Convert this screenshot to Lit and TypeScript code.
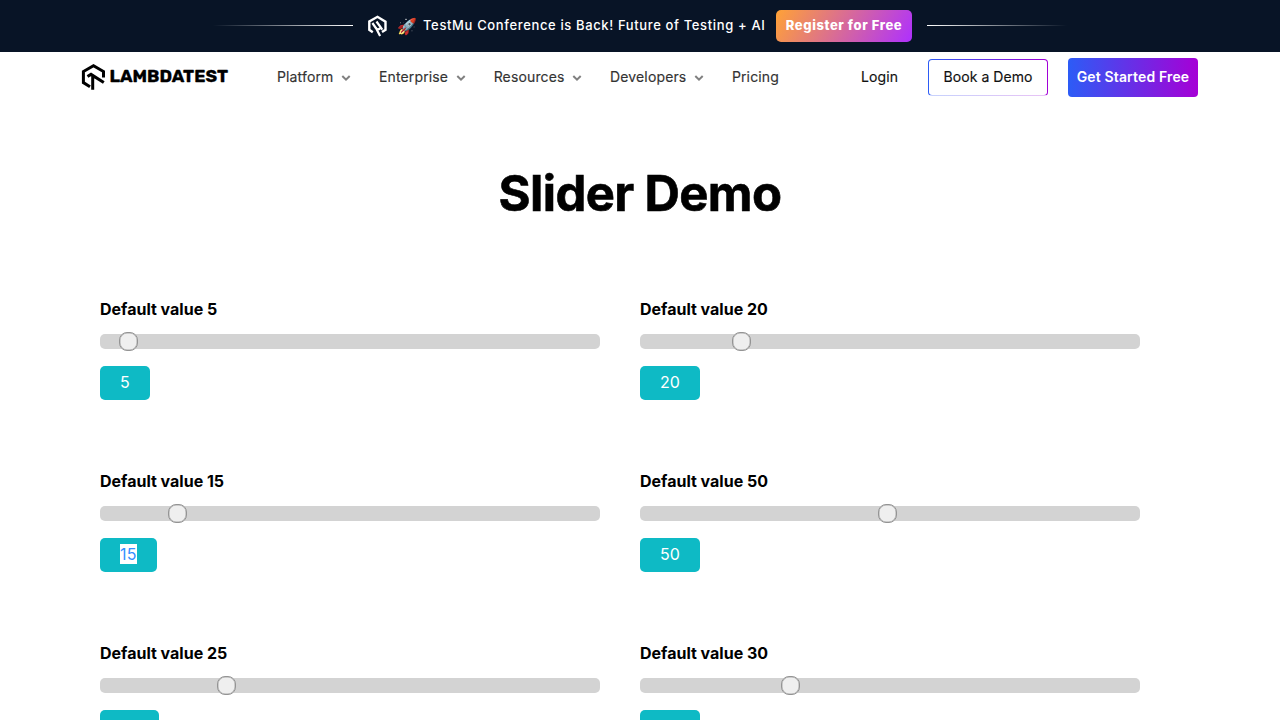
import { LitElement, html, css, svg } from "lit";
import { customElement, property } from "lit/decorators.js";
import { styleMap } from "lit/directives/style-map.js";

@customElement("range-slider")
class RangeSlider extends LitElement {
  @property({ type: Number }) value = 1;
  @property({ type: Boolean }) selected = false;
  static styles = css`
    :host { display: block; width: 500px; height: 172px; }
    h4 { margin: 0; font-size: 16px; line-height: 24px; font-weight: 700; letter-spacing: 0; }
    .row { display: flex; align-items: center; height: 15px; margin-top: 13px; border-radius: 5px; background: #d3d3d3; }
    .thumb { box-sizing: border-box; flex: none; width: 19px; height: 19px; border: 1px solid #949494; border-radius: 8px; background: #efefef; box-shadow: inset 0 0 0 0.5px #aaa; }
    output { display: inline-block; height: 34px; margin-top: 17px; padding: 0 20px; border-radius: 5px; background: #0ebac5; color: #fff; font-size: 16px; line-height: 32px; }
    .mark { display: inline-block; line-height: 20px; }
    .selected .mark { width: 17px; background: #fff; color: #3390ff; letter-spacing: 0.3px; }
  `;
  render() {
    const offset = ((this.value - 1) / 99) * 481;
    return html`
      <h4>Default value ${this.value}</h4>
      <div class="row"><div class="thumb" style=${styleMap({ marginLeft: `${offset}px` })}></div></div>
      <output class=${this.selected ? "selected" : ""}><span class="mark">${this.value}</span></output>
    `;
  }
}

const chevron = svg`<svg class="chevron" width="10" height="8" viewBox="0 0 10 8" fill="none" stroke="#808080" stroke-width="2"><path d="M1.3 2 5 5.7 8.7 2"/></svg>`;

@customElement("app-root")
class AppRoot extends LitElement {
  static styles = css`
    :host { display: block; height: 720px; overflow: hidden; background: #fff; color: #000; font-family: Inter, sans-serif; }
    .banner { display: flex; align-items: center; height: 52px; padding-left: 213px; background: #081426; color: #fff; white-space: nowrap; }
    .line { width: 140px; height: 1px; margin-bottom: 1px; background: linear-gradient(90deg, transparent, #fff); }
    .line.right { margin-left: 15px; background: linear-gradient(270deg, transparent, #fff); }
    .mu { margin-left: 14px; margin-bottom: 1px; }
    .rocket { width: 20px; margin-left: 9px; }
    .message { width: 342px; margin-left: 6px; margin-bottom: 2px; font-size: 13px; font-weight: 500; letter-spacing: 0.635px; }
    .register { box-sizing: border-box; width: 136px; height: 32px; margin-left: 11px; border-radius: 5px; background: linear-gradient(120deg, #ffa236, #ae30ff); font-size: 13px; line-height: 30px; font-weight: 800; text-align: center; letter-spacing: 0.6px; }
    nav { display: flex; align-items: center; height: 51px; padding-left: 81px; font-size: 14px; color: #333; white-space: nowrap; }
    .logo { width: 148px; height: 28px; margin-right: 48px; margin-bottom: 2px; }
    .logo text { font: 700 16.5px Rubik, Inter, sans-serif; stroke: #000; stroke-width: 0.3px; }
    .item { display: flex; align-items: center; margin-right: 28px; margin-bottom: 2px; -webkit-text-stroke: 0.15px #333; }
    .item span { letter-spacing: 0.14px; }
    .chevron { margin-left: 7.5px; margin-top: 3px; }
    .actions { display: flex; align-items: center; width: 337px; margin-left: auto; margin-right: 82px; color: #111; }
    .login { margin-bottom: 2px; letter-spacing: 0.1px; -webkit-text-stroke: 0.15px #111; }
    .demo { box-sizing: border-box; width: 120px; height: 37px; margin-left: auto; padding: 1px; border-radius: 4px; background: linear-gradient(90deg, #c6d2fd, #e8c2f5) bottom / 100% 1px no-repeat, linear-gradient(90deg, #2c5cf6, #a100d6); -webkit-text-stroke: 0.15px #111; }
    .demo span { display: block; height: 35px; border-radius: 3px; background: #fff; line-height: 33px; text-align: center; letter-spacing: 0.05px; }
    .start { width: 130px; height: 39px; margin-left: 20px; border-radius: 4px; background: linear-gradient(90deg, #2c5cf6, #a600d6); color: #fff; line-height: 37px; text-align: center; font-weight: 600; letter-spacing: 0.14px; }
    h1 { margin: 61px 0 0; font-size: 49px; line-height: 60px; font-weight: 700; text-align: center; letter-spacing: -0.62px; -webkit-text-stroke: 0.6px #000; }
    .grid { display: grid; grid-template-columns: 540px 540px; padding: 73px 0 0 100px; }
  `;
  render() {
    return html`
      <header class="banner">
        <div class="line"></div>
        <svg class="mu" width="21" height="22" viewBox="0 0 21 22" fill="none" stroke="#fff" stroke-width="2.4"><path d="M5.8 17.2 2.3 14.8V6.5L10.5 1.8l8 4.8v8.2L15 17"/><path d="M5.4 8 9 13.2q2 2.3 4 0M9.5 6.5l5.8 8.2M8.7 12.5l4.4 8.5" stroke-width="2.2"/></svg>
        <span class="rocket">🚀</span>
        <span class="message">TestMu Conference is Back! Future of Testing + AI</span>
        <span class="register">Register for Free</span>
        <div class="line right"></div>
      </header>
      <nav>
        <svg class="logo" viewBox="0 0 148 28"><g fill="none" stroke="#000" stroke-width="3"><path d="M9 23.7 2.4 19.6V8.5L12.5 2.7l10 5.8v6"/><path d="M6.5 13.6 10 11.4l12.8 8.2M11.7 12v14.7"/></g><text x="28.5" y="19" textLength="118.5" lengthAdjust="spacingAndGlyphs">LAMBDATEST</text></svg>
        ${["Platform", "Enterprise", "Resources", "Developers"].map((label) => html`<div class="item"><span>${label}</span>${chevron}</div>`)}
        <div class="item"><span>Pricing</span></div>
        <div class="actions"><span class="login">Login</span><div class="demo"><span>Book a Demo</span></div><div class="start">Get Started Free</div></div>
      </nav>
      <main>
        <h1>Slider Demo</h1>
        <section class="grid">
          ${[5, 20, 15, 50, 25, 30].map((v) => html`<range-slider .value=${v} .selected=${v === 15}></range-slider>`)}
        </section>
      </main>
    `;
  }
}
